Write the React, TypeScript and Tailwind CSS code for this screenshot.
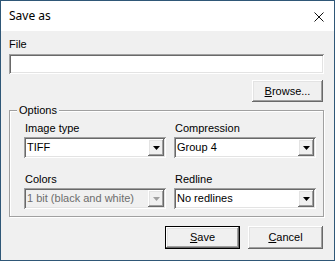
import React from "react";

const raised =
  "shadow-[inset_-1px_-1px_#696969,inset_1px_1px_#ffffff,inset_-2px_-2px_#a0a0a0,inset_2px_2px_#e3e3e3]";
const sunken =
  "shadow-[inset_1px_1px_#a0a0a0,inset_-1px_-1px_#ffffff,inset_2px_2px_#696969,inset_-2px_-2px_#e3e3e3]";

function Arrow({ disabled }: { disabled?: boolean }) {
  return (
    <svg width="7" height="4" viewBox="0 0 7 4">
      <path d="M0 0h7L3.5 4z" fill={disabled ? "#a0a0a0" : "#000"} />
    </svg>
  );
}

function Combo({ value, disabled }: { value: string; disabled?: boolean }) {
  return (
    <div
      className={`flex h-[21px] w-[142px] items-stretch p-[2px] ${sunken} ${
        disabled ? "bg-[#f0f0f0]" : "bg-white"
      }`}
    >
      <div
        className={`flex flex-1 items-center pl-[1px] text-[11px] leading-[13px] ${
          disabled ? "text-[#6d6d6d]" : "text-black"
        }`}
      >
        {value}
      </div>
      <div className={`flex w-[16px] items-center justify-center bg-[#f0f0f0] ${raised}`}>
        <Arrow disabled={disabled} />
      </div>
    </div>
  );
}

function Button({ children, isDefault, className = "" }: { children: React.ReactNode; isDefault?: boolean; className?: string }) {
  return (
    <div
      className={`flex items-center justify-center bg-[#f0f0f0] text-[11px] leading-[13px] text-black ${
        isDefault ? "border border-black" : ""
      } ${className}`}
    >
      <div className={`flex h-full w-full items-center justify-center ${raised}`}>{children}</div>
    </div>
  );
}

export default function App() {
  return (
    <div
      className="flex h-[261px] w-[335px] flex-col border border-[#2f5777] bg-[#f0f0f0]"
      style={{ fontFamily: '"Liberation Sans", Arial, sans-serif' }}
    >
      {/* title bar */}
      <div className="flex h-[30px] shrink-0 items-center justify-between bg-white pl-[8px] pr-[10px]">
        <span className="text-[12px] text-black" style={{ fontFamily: '"Noto Sans", "Open Sans", sans-serif' }}>
          Save as
        </span>
        <svg width="10" height="10" viewBox="0 0 10 10" className="mt-[1px]">
          <path d="M0.5 0.5L9.5 9.5M9.5 0.5L0.5 9.5" stroke="#111" strokeWidth="1" />
        </svg>
      </div>

      <div className="flex flex-col pl-[8px] pr-[10px] pt-[7px]">
        <div className="text-[11px] leading-[13px] text-black">File</div>
        <div className={`mt-[3px] h-[20px] w-full bg-white ${sunken}`} />

        <div className="mt-[6px] flex justify-end pr-[1px]">
          <Button className="h-[22px] w-[71px]">
            <span>
              <u>B</u>rowse...
            </span>
          </Button>
        </div>

        {/* Options group */}
        <div className="relative mt-[8px] h-[107px] border border-[#a0a0a0] shadow-[inset_1px_1px_#ffffff,1px_1px_#ffffff]">
          <span className="absolute left-[7px] top-[-7px] bg-[#f0f0f0] px-[2px] text-[11px] leading-[13px] text-black">
            Options
          </span>
          <div className="grid grid-cols-[142px_142px] gap-x-[8px] pl-[14px] pt-[11px]">
            <div className="flex flex-col">
              <div className="pl-[1px] text-[11px] leading-[13px] text-black">Image type</div>
              <div className="mt-[2px]">
                <Combo value="TIFF" />
              </div>
            </div>
            <div className="flex flex-col">
              <div className="pl-[1px] text-[11px] leading-[13px] text-black">Compression</div>
              <div className="mt-[2px]">
                <Combo value="Group 4" />
              </div>
            </div>
            <div className="mt-[15px] flex flex-col">
              <div className="pl-[1px] text-[11px] leading-[13px] text-black">Colors</div>
              <div className="mt-[2px]">
                <Combo value="1 bit (black and white)" disabled />
              </div>
            </div>
            <div className="mt-[15px] flex flex-col">
              <div className="pl-[1px] text-[11px] leading-[13px] text-black">Redline</div>
              <div className="mt-[2px]">
                <Combo value="No redlines" />
              </div>
            </div>
          </div>
        </div>

        <div className="mt-[9px] flex justify-end gap-[8px] pr-[1px]">
          <Button isDefault className="h-[23px] w-[75px]">
            <span>
              <u>S</u>ave
            </span>
          </Button>
          <Button className="h-[23px] w-[75px]">
            <span>
              <u>C</u>ancel
            </span>
          </Button>
        </div>
      </div>
    </div>
  );
}
